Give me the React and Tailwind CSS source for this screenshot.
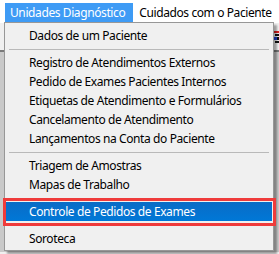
import React from 'react';

const groups = [
  ['Dados de um Paciente'],
  [
    'Registro de Atendimentos Externos',
    'Pedido de Exames Pacientes Internos',
    'Etiquetas de Atendimento e Formulários',
    'Cancelamento de Atendimento',
    'Lançamentos na Conta do Paciente',
  ],
  ['Triagem de Amostras', 'Mapas de Trabalho'],
  ['Controle de Pedidos de Exames'],
  ['Soroteca'],
];

const selected = 'Controle de Pedidos de Exames';

function Separator() {
  return (
    <div className="h-[8px] flex items-center px-[4px]">
      <div className="h-px w-full bg-[#b9b9b9]" />
    </div>
  );
}

function Item({ label }) {
  const active = label === selected;
  return (
    <div
      className={
        active
          ? 'h-[19px] mx-[1px] flex items-center pl-[23px] whitespace-nowrap text-white bg-gradient-to-b from-[#0a6cc6] to-[#0078d7]'
          : 'h-[19px] mx-[1px] flex items-center pl-[23px] whitespace-nowrap text-black'
      }
    >
      {label}
    </div>
  );
}

export default function App() {
  return (
    <div className="relative w-[279px] h-[254px] overflow-hidden bg-[#f0f0f0] text-[12px] leading-none tracking-[-0.4px] font-['Noto_Sans',sans-serif]">
      {/* Barra de menus */}
      <div className="h-[23px] bg-white flex items-end pl-[5px] pb-px whitespace-nowrap">
        <div className="h-[19px] pl-[5px] pr-[8px] flex items-center bg-[#3e9bf5] text-white">Unidades Diagnóstico</div>
        <div className="h-[19px] px-[6px] flex items-center text-black">Cuidados com o Paciente</div>
      </div>

      {/* Janela por trás */}
      <div className="h-[29px] border-b-2 border-[#7a7a7a] bg-[#f0f0f0]" />
      <div className="h-[200px] bg-[#c9c9c9]" />

      {/* Ícone da barra de ferramentas, parcialmente visível */}
      <svg className="absolute left-[274px] top-[29px]" width="6" height="16" viewBox="0 0 6 16">
        <rect x="0" y="2" width="6" height="2" fill="#e02020" />
        <rect x="1" y="5" width="4" height="2" fill="#111" />
        <rect x="0" y="8" width="3" height="3" fill="#2040d0" />
        <rect x="3" y="8" width="3" height="3" fill="#111" />
        <rect x="1" y="12" width="4" height="2" fill="#111" />
      </svg>

      {/* Menu suspenso */}
      <div className="absolute left-[4px] top-[22px] w-[270px] border border-[#979797] bg-[#f0f0f0] pt-[3px] pb-[2px] shadow-[3px_3px_2px_rgba(0,0,0,0.35)]">
        {groups.map((g, i) => (
          <div key={i}>
            {i > 0 && <Separator />}
            {g.map((label) => (
              <Item key={label} label={label} />
            ))}
          </div>
        ))}
      </div>

      {/* Destaque vermelho */}
      <div className="absolute left-[3px] top-[198px] w-[273px] h-[28px] border-[3px] border-[#ef3b3b]" />
    </div>
  );
}
